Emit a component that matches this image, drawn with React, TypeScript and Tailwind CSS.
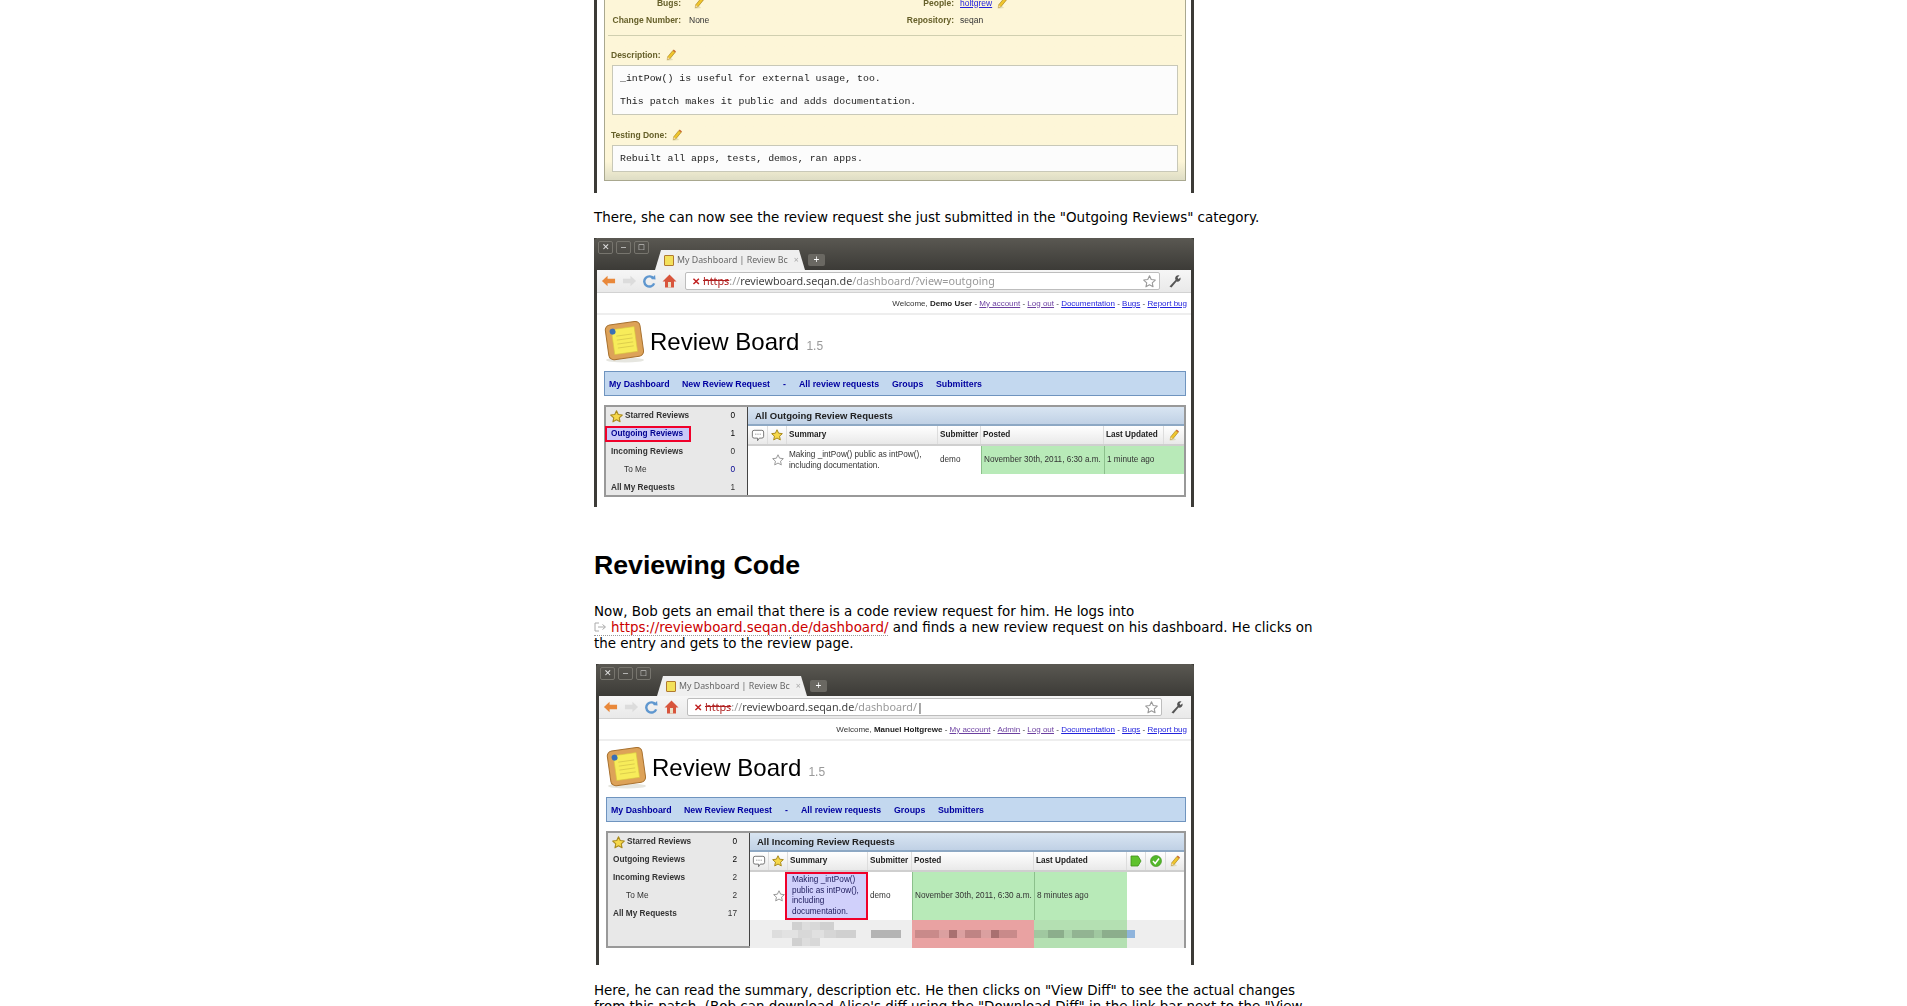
const Star = ({ filled = true, size = 12 }: { filled?: boolean; size?: number }) => (
  <svg width={size} height={size} viewBox="0 0 24 24" className="shrink-0">
    <path
      d="M12 1.500l3.200 6.900 7.500.9-5.600 5.100 1.500 7.400L12 18.100l-6.600 3.700 1.500-7.400L1.300 9.300l7.500-.9z"
      fill={filled ? "#f6d84a" : "#ffffff"}
      stroke={filled ? "#a98a1c" : "#9a9a9a"}
      strokeWidth="2"
      strokeLinejoin="round"
    />
  </svg>
);

const Pencil = ({ size = 12 }: { size?: number }) => (
  <svg width={size} height={size} viewBox="0 0 16 16" className="shrink-0 inline-block">
    <path d="M2 15.500l9-1-6-5z" fill="#d8d3a8" opacity="0.7" />
    <path d="M3.500 10.500L10.500 2l3 2.500L6.500 13l-3.500 1z" fill="#f0c52e" stroke="#9c7a12" strokeWidth="0.8" />
    <path d="M10.500 2l1.200-1.200 3 2.500L13.500 4.500z" fill="#c9662b" />
    <path d="M3.500 10.500l-.5 3.500 3.500-1z" fill="#f3d9a8" />
  </svg>
);

const Comment = () => (
  <svg width="14" height="13" viewBox="0 0 16 15">
    <path
      d="M3.500 1.500h9a2 2 0 0 1 2 2v5a2 2 0 0 1-2 2H9.500l-2 3v-3h-4a2 2 0 0 1-2-2v-5a2 2 0 0 1 2-2z"
      fill="#fff"
      stroke="#666"
      strokeWidth="1"
    />
    <path d="M5 6h1M7.500 6h1M10 6h1" stroke="#555" strokeWidth="1" />
  </svg>
);

const Logo = () => (
  <svg width="42" height="42" viewBox="0 0 42 42" className="shrink-0">
    <ellipse cx="21" cy="39" rx="19" ry="2.500" fill="#e6e6e0" />
    <g transform="rotate(-8 21 20)">
      <rect x="3" y="2" width="35" height="35" rx="5" fill="#dda258" stroke="#a8712f" strokeWidth="1" />
      <rect x="9" y="7" width="23" height="25" fill="#f7ec5a" stroke="#d9c840" strokeWidth="0.6" />
      <path d="M13 14h16M13 18h16M13 22h16M13 26h16" stroke="#d8c94a" strokeWidth="0.8" />
      <circle cx="10" cy="9" r="3" fill="#3a6fb5" />
    </g>
  </svg>
);

const Toolbar = ({ host, path, caret }: { host: string; path: string; caret: boolean }) => (
  <div className="h-[23px] flex items-center bg-gradient-to-b from-[#f6f6f6] to-[#e9e9e9] border-b border-[#d2d2d2] pl-[4px] pr-[4px]">
    <div className="flex items-center gap-[6px] w-[84px]">
      <svg width="15" height="12" viewBox="0 0 16 12">
        <path d="M7 0.500L1 6l6 5.500V8.500h8v-5H7z" fill="#e9883a" />
      </svg>
      <svg width="15" height="12" viewBox="0 0 16 12">
        <path d="M9 0.500L15 6l-6 5.500V8.500H1v-5h8z" fill="#dcdcdc" />
      </svg>
      <svg width="13" height="14" viewBox="0 0 14 14">
        <path d="M11.500 4.500A5.500 5.500 0 1 0 12 9.500" fill="none" stroke="#5f97cf" strokeWidth="2.600" />
        <path d="M8.500 4.800L13.500 5.500 13 0.500z" fill="#5f97cf" />
      </svg>
      <svg width="15" height="14" viewBox="0 0 15 14">
        <path d="M7.500 0.500L0.500 7.500h2.500v6h9v-6h2.500z" fill="#d8553c" />
        <rect x="6" y="8" width="3" height="5.500" fill="#e9e1c8" />
      </svg>
    </div>
    <div className="w-[475px] h-[18px] flex items-center bg-white border border-[#bdbdbd] rounded-[2px] pl-[6px] pr-[3px] font-['Noto_Sans',sans-serif] text-[10.800px] leading-none whitespace-nowrap">
      <span className="text-[#c02020] font-bold mr-[3px] text-[10px]">✕</span>
      <span className="text-[#b02020] line-through">https</span>
      <span className="text-[#999]">://</span>
      <span className="text-[#444]">{host}</span>
      <span className="text-[#999]">{path}</span>
      {caret && <span className="text-[#222]">|</span>}
      <div className="ml-auto">
        <Star filled={false} size={13} />
      </div>
    </div>
    <svg width="14" height="14" viewBox="0 0 14 14" className="ml-[8px]">
      <path d="M1.500 12.500l6-6.500a3.200 3.200 0 0 1 4-4.500L9.500 3.500l1 1.500 2-1.500a3.200 3.200 0 0 1-4 4l-5 6z" fill="#555" />
    </svg>
  </div>
);

const sidebarLabel = "font-bold text-[#333]";

type SidebarCounts = { outgoing: string; incoming: string; toMe: string; all: string };

const Sidebar = ({ counts, highlight }: { counts: SidebarCounts; highlight: boolean }) => (
  <div className="w-[142px] shrink-0 bg-[#e8e8e8] border-r border-[#444] text-[8.250px]">
    <div className="h-[18px] flex items-center justify-between pl-[4px] pr-[12px]">
      <span className={`flex items-center gap-[2px] ${sidebarLabel}`}>
        <Star size={13} />
        Starred Reviews
      </span>
      <span>0</span>
    </div>
    <div className="h-[18px] flex items-center justify-between pr-[12px]">
      <span
        className={
          highlight
            ? "-ml-[1px] w-[86px] h-[16px] flex items-center pl-[4px] bg-[#c8c8f8] border-2 border-[#f0002a] font-bold text-[#000090]"
            : `pl-[5px] ${sidebarLabel}`
        }
      >
        Outgoing Reviews
      </span>
      <span>{counts.outgoing}</span>
    </div>
    <div className={`h-[18px] flex items-center justify-between pl-[5px] pr-[12px] ${sidebarLabel}`}>
      <span>Incoming Reviews</span>
      <span className="font-normal">{counts.incoming}</span>
    </div>
    <div className="h-[18px] flex items-center justify-between pl-[18px] pr-[12px] text-[#333]">
      <span>To Me</span>
      <span className={highlight ? "text-[#000090]" : ""}>{counts.toMe}</span>
    </div>
    <div className={`h-[18px] flex items-center justify-between pl-[5px] pr-[12px] ${sidebarLabel}`}>
      <span>All My Requests</span>
      <span className="font-normal">{counts.all}</span>
    </div>
  </div>
);

const headCell = "flex items-center border-r border-[#ddd] px-[2px] font-bold text-[#222] whitespace-nowrap overflow-hidden";

const OutgoingTable = () => (
  <div className="flex-1 text-[8.200px] text-[#333]">
    <div className="grid grid-cols-[20px_19px_151px_43px_123px_60px_1fr] h-[20px] bg-gradient-to-b from-white to-[#e9e9e9] border-b-2 border-[#cfcfcf]">
      <div className={`${headCell} justify-center !px-0`}>
        <Comment />
      </div>
      <div className={`${headCell} justify-center !px-0`}>
        <Star />
      </div>
      <div className={headCell}>Summary</div>
      <div className={headCell}>Submitter</div>
      <div className={headCell}>Posted</div>
      <div className={headCell}>Last Updated</div>
      <div className="flex items-center justify-center">
        <Pencil />
      </div>
    </div>
    <div className="grid grid-cols-[20px_19px_151px_43px_123px_60px_1fr] h-[28px]">
      <div />
      <div className="flex items-center justify-center">
        <Star filled={false} />
      </div>
      <div className="self-center px-[2px] leading-[11px]">
        Making _intPow() public as intPow(),
        <br />
        including documentation.
      </div>
      <div className="flex items-center px-[2px]">demo</div>
      <div className="flex items-center px-[2px] bg-[#b8eab8] border-l border-[#8cc08c] whitespace-nowrap">
        November 30th, 2011, 6:30 a.m.
      </div>
      <div className="flex items-center px-[2px] bg-[#b8eab8] border-l border-[#8cc08c] whitespace-nowrap">
        1 minute ago
      </div>
      <div className="bg-[#b8eab8]" />
    </div>
  </div>
);

const pixelTop = ["w-[20px] bg-transparent", "w-[10px] bg-[#d0d0d0]", "w-[8px] bg-[#dddddd]", "w-[10px] bg-[#d8d8d8]", "w-[14px] bg-[#d0d0d0]"];
const pixelMid = ["w-[10px] bg-[#dddddd]", "w-[16px] bg-[#e2e2e2]", "w-[14px] bg-[#d8d8d8]", "w-[12px] bg-[#e0e0e0]", "w-[12px] bg-[#d6d6d6]", "w-[20px] bg-[#d0d0d0]"];
const pixelRed = ["w-[24px] bg-[#c98a8a]", "w-[10px] bg-[#dba0a0]", "w-[8px] bg-[#a97070]", "w-[8px] bg-[#dba0a0]", "w-[16px] bg-[#bf8484]", "w-[10px] bg-[#dba0a0]", "w-[8px] bg-[#a97070]", "w-[18px] bg-[#c98a8a]"];
const pixelGreen = ["w-[14px] bg-[#a0c8a0]", "w-[16px] bg-[#8cae8c]", "w-[8px] bg-[#a8d0a8]", "w-[22px] bg-[#92b492]", "w-[8px] bg-[#a0c8a0]", "w-[25px] bg-[#8cae8c]"];

const IncomingTable = () => (
  <div className="flex-1 text-[8.200px] text-[#333] flex flex-col">
    <div className="grid grid-cols-[19px_19px_80px_44px_122px_93px_19px_20px_1fr] h-[20px] bg-gradient-to-b from-white to-[#e9e9e9] border-b-2 border-[#cfcfcf]">
      <div className={`${headCell} justify-center !px-0`}>
        <Comment />
      </div>
      <div className={`${headCell} justify-center !px-0`}>
        <Star />
      </div>
      <div className={headCell}>Summary</div>
      <div className={headCell}>Submitter</div>
      <div className={headCell}>Posted</div>
      <div className={headCell}>Last Updated</div>
      <div className={`${headCell} justify-center !px-0`}>
        <svg width="12" height="12" viewBox="0 0 12 12">
          <path d="M1 1h7l3 5-3 5H1z" fill="#5fc22e" stroke="#3f8f1a" strokeWidth="0.8" />
        </svg>
      </div>
      <div className={`${headCell} justify-center !px-0`}>
        <svg width="12" height="12" viewBox="0 0 12 12">
          <circle cx="6" cy="6" r="5.500" fill="#52b82a" stroke="#3f8f1a" strokeWidth="0.6" />
          <path d="M3 6l2.200 2.500L9 3.500" fill="none" stroke="#fff" strokeWidth="1.500" />
        </svg>
      </div>
      <div className="flex items-center justify-center">
        <Pencil />
      </div>
    </div>
    <div className="grid grid-cols-[19px_19px_80px_44px_122px_93px_1fr] h-[48px]">
      <div />
      <div className="flex items-center justify-center">
        <Star filled={false} />
      </div>
      <div className="bg-[#d0d0fb] border-[2px] border-[#f0002a] -ml-[3px] flex items-center pl-[5px] pr-[2px] leading-[10.500px] text-[#222060]">
        <div>
          Making _intPow()
          <br />
          public as intPow(),
          <br />
          including
          <br />
          documentation.
        </div>
      </div>
      <div className="flex items-center px-[2px]">demo</div>
      <div className="flex items-center px-[2px] bg-[#b8eab8] border-l border-[#8cc08c] whitespace-nowrap">
        November 30th, 2011, 6:30 a.m.
      </div>
      <div className="flex items-center px-[2px] bg-[#b8eab8] border-l border-[#8cc08c] whitespace-nowrap">
        8 minutes ago
      </div>
      <div />
    </div>
    <div className="flex-1 bg-[#eeeeee] grid grid-cols-[38px_80px_44px_122px_93px_1fr]">
      <div />
      <div className="flex flex-col justify-between py-[2px] -ml-[16px]">
        <div className="flex h-[8px]">
          {pixelTop.map((c, i) => (
            <div key={i} className={c} />
          ))}
        </div>
        <div className="flex h-[8px]">
          {pixelMid.map((c, i) => (
            <div key={i} className={c} />
          ))}
        </div>
        <div className="flex h-[8px] pl-[20px]">
          {pixelTop.slice(1, 4).map((c, i) => (
            <div key={i} className={c} />
          ))}
        </div>
      </div>
      <div className="flex items-center pl-[3px]">
        <div className="w-[30px] h-[8px] bg-[#b4b4b4]" />
      </div>
      <div className="flex items-center bg-[#e9a2a2] pl-[3px]">
        {pixelRed.map((c, i) => (
          <div key={i} className={`h-[8px] ${c}`} />
        ))}
      </div>
      <div className="flex items-center bg-[#b4e0b2]">
        {pixelGreen.map((c, i) => (
          <div key={i} className={`h-[8px] ${c}`} />
        ))}
      </div>
      <div className="flex items-center">
        <div className="w-[8px] h-[8px] bg-[#8fb4dc]" />
      </div>
    </div>
  </div>
);

type BrowserProps = {
  host: string;
  path: string;
  caret?: boolean;
  welcome: string;
  links: { label: string; visited?: boolean }[];
  heading: string;
  counts: SidebarCounts;
  highlight: boolean;
  table: React.ReactNode;
  panelHeight: string;
  className: string;
};

const Browser = ({ host, path, caret = false, welcome, links, heading, counts, highlight, table, panelHeight, className }: BrowserProps) => (
  <div className={`bg-white border-x-[3px] border-[#3c3b37] blur-[0.3px] font-['Liberation_Sans',sans-serif] ${className}`}>
    <div className="h-[32px] -mx-[3px] rounded-t-[4px] bg-gradient-to-b from-[#5a5852] to-[#3c3b37] relative flex items-start pl-[4px] pt-[3px] gap-[3px]">
      {["✕", "–", "□"].map((g) => (
        <div key={g} className="w-[15px] h-[13px] border border-[#77756e] rounded-[2px] text-[#e4e4e4] text-[9px] leading-[11px] text-center">
          {g}
        </div>
      ))}
      <div className="absolute left-[61px] bottom-0 w-[150px] h-[20px] bg-[#efefef] [clip-path:polygon(6px_0,calc(100%-6px)_0,100%_100%,0_100%)] flex items-center pl-[9px] gap-[3px] text-[8.800px] text-[#666] font-['Noto_Sans',sans-serif] whitespace-nowrap">
        <span className="w-[10px] h-[11px] bg-[#f3e05a] border border-[#b07a30] rounded-[1px]" />
        My Dashboard | Review Bc
        <span className="ml-[3px] text-[#aaa]">×</span>
      </div>
      <div className="absolute left-[214px] bottom-[4px] w-[17px] h-[12px] bg-[#6a6862] rounded-[2px] text-white text-[10px] leading-[12px] text-center">
        +
      </div>
    </div>
    <Toolbar host={host} path={path} caret={caret} />
    <div className="h-[22px] flex items-center justify-end pr-[4px] pt-[1px] border-b-2 border-[#eeeeee] text-[8px] text-[#333] whitespace-nowrap">
      Welcome,&nbsp;<b className="text-[#222]">{welcome}</b>
      {links.map((l) => (
        <span key={l.label}>
          &nbsp;-&nbsp;
          <span className={`underline ${l.visited ? "text-[#6b3fa0]" : "text-[#2222dd]"}`}>{l.label}</span>
        </span>
      ))}
    </div>
    <div className="h-[56px] flex items-center pl-[7px] gap-[4px] pb-[2px]">
      <Logo />
      <span className="text-[24px] text-black leading-none">Review Board</span>
      <span className="text-[12px] text-[#999] mt-[7px] ml-[3px]">1.5</span>
    </div>
    <div className="ml-[7px] mr-[5px] h-[25px] flex items-center pl-[4px] bg-[#c3d8ef] border border-[#6f94bf] text-[8.800px] font-bold text-[#0000a0] whitespace-nowrap">
      <span className="w-[73px]">My Dashboard</span>
      <span className="w-[101px]">New Review Request</span>
      <span className="w-[16px]">-</span>
      <span className="w-[93px]">All review requests</span>
      <span className="w-[44px]">Groups</span>
      <span>Submitters</span>
    </div>
    <div className={`ml-[7px] mr-[5px] mt-[9px] flex border-2 border-[#999] ${panelHeight}`}>
      <Sidebar counts={counts} highlight={highlight} />
      <div className="flex-1 flex flex-col min-w-0">
        <div className="h-[19px] shrink-0 flex items-center pl-[7px] bg-gradient-to-b from-[#d9e5f2] to-[#c0d1e5] border-b-2 border-[#8da8c4] text-[9.500px] font-bold text-[#222]">
          {heading}
        </div>
        {table}
      </div>
    </div>
  </div>
);

const DetailLabel = ({ children }: { children: React.ReactNode }) => (
  <div className="flex items-center gap-[4px] text-[8.500px] font-bold text-[#66602a] ml-[6px] h-[12px]">
    {children}
    <Pencil />
  </div>
);

const ReviewRequestCrop = () => (
  <div className="h-[193px] flex flex-col justify-end overflow-hidden w-[600px] border-x-[3px] border-[#3c3b37] bg-white font-['Liberation_Sans',sans-serif] blur-[0.3px]">
    <div className="ml-[7px] mr-[5px] mb-[12px] bg-gradient-to-b from-[#fdf6d8] from-90% to-[#deddc5] border-x border-b border-[#a9a88f] pb-[8px]">
      <div className="grid grid-cols-[287px_1fr] text-[8.500px] text-[#333]">
        <div className="h-[17px] flex items-center">
          <span className="w-[76px] text-right font-bold text-[#66602a]">Bugs:</span>
          <span className="ml-[12px]">
            <Pencil />
          </span>
        </div>
        <div className="h-[17px] flex items-center">
          <span className="w-[62px] text-right font-bold text-[#66602a]">People:</span>
          <span className="ml-[6px] underline text-[#2222dd]">holtgrew</span>
          <span className="ml-[4px]">
            <Pencil />
          </span>
        </div>
        <div className="h-[17px] flex items-center">
          <span className="w-[76px] text-right font-bold text-[#66602a] whitespace-nowrap">Change Number:</span>
          <span className="ml-[8px]">None</span>
        </div>
        <div className="h-[17px] flex items-center">
          <span className="w-[62px] text-right font-bold text-[#66602a]">Repository:</span>
          <span className="ml-[6px]">seqan</span>
        </div>
      </div>
      <div className="mx-[3px] mt-[7px] border-t border-[#d0cfb0]" />
      <div className="mt-[13px]">
        <DetailLabel>Description:</DetailLabel>
      </div>
      <div className="mx-[7px] mt-[4px] h-[50px] bg-[#fcfcfc] border border-[#c8c8b8] pl-[7px] flex flex-col justify-center gap-[12px] font-['Liberation_Mono',monospace] text-[9.900px] leading-[11px] text-[#222]">
        <div>_intPow() is useful for external usage, too.</div>
        <div>This patch makes it public and adds documentation.</div>
      </div>
      <div className="mt-[14px]">
        <DetailLabel>Testing Done:</DetailLabel>
      </div>
      <div className="mx-[7px] mt-[4px] h-[27px] bg-[#fcfcfc] border border-[#c8c8b8] pl-[7px] flex items-center font-['Liberation_Mono',monospace] text-[9.900px] text-[#222]">
        Rebuilt all apps, tests, demos, ran apps.
      </div>
    </div>
  </div>
);

export default function App() {
  return (
    <div className="h-screen overflow-hidden bg-white pl-[594px] font-['DejaVu_Sans',sans-serif] text-[13.450px] leading-[16px] text-black">
      <div className="w-[726px]">
        <ReviewRequestCrop />
        <p className="mt-[17px]">There, she can now see the review request she just submitted in the "Outgoing Reviews" category.</p>
        <Browser
          className="mt-[12px] w-[600px] h-[269px]"
          host="reviewboard.seqan.de"
          path="/dashboard/?view=outgoing"
          welcome="Demo User"
          links={[
            { label: "My account", visited: true },
            { label: "Log out", visited: true },
            { label: "Documentation" },
            { label: "Bugs" },
            { label: "Report bug" },
          ]}
          heading="All Outgoing Review Requests"
          counts={{ outgoing: "1", incoming: "0", toMe: "0", all: "1" }}
          highlight
          table={<OutgoingTable />}
          panelHeight="h-[92px]"
        />
        <h2 className="mt-[42px] font-['Liberation_Sans',sans-serif] font-bold text-[26.700px] leading-[32px]">Reviewing Code</h2>
        <p className="mt-[23px]">
          Now, Bob gets an email that there is a code review request for him. He logs into{" "}
          <span className="whitespace-nowrap text-[#cc0000] border-b border-dotted border-[#999]">
            <svg width="14" height="10" viewBox="0 0 14 10" className="inline-block mr-[3px] align-baseline">
              <path d="M5 1H1v8h4M4 5h7M8.500 2.500L11.500 5l-3 2.500" fill="none" stroke="#aaa" strokeWidth="1" />
            </svg>
            https://reviewboard.seqan.de/dashboard/
          </span>{" "}
          and finds a new review request on his dashboard. He clicks on the entry and gets to the review page.
        </p>
        <Browser
          className="mt-[12px] ml-[2px] w-[598px] h-[301px]"
          host="reviewboard.seqan.de"
          path="/dashboard/"
          caret
          welcome="Manuel Holtgrewe"
          links={[
            { label: "My account", visited: true },
            { label: "Admin", visited: true },
            { label: "Log out", visited: true },
            { label: "Documentation" },
            { label: "Bugs" },
            { label: "Report bug" },
          ]}
          heading="All Incoming Review Requests"
          counts={{ outgoing: "2", incoming: "2", toMe: "2", all: "17" }}
          highlight={false}
          table={<IncomingTable />}
          panelHeight="h-[117px]"
        />
        <p className="mt-[18px]">
          Here, he can read the summary, description etc. He then clicks on "View Diff" to see the actual changes from this patch. (Bob can download Alice's diff using the "Download Diff" in the link bar next to the "View Diff" link.)
        </p>
      </div>
    </div>
  );
}
